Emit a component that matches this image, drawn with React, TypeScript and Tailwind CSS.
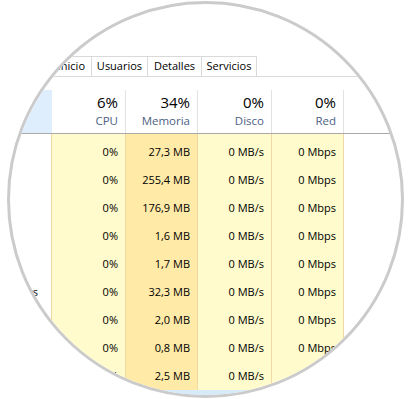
// Administrador de tareas — vista recortada en círculo
const FONT = "font-['Open_Sans','Segoe_UI',sans-serif]";

type Row = { name: string; cpu: string; mem: string; disk: string; net: string };

// Solo la fila 6 deja ver el final de su nombre dentro del círculo
const ROWS: Row[] = [
  { name: "", cpu: "0%", mem: "27,3 MB", disk: "0 MB/s", net: "0 Mbps" },
  { name: "", cpu: "0%", mem: "255,4 MB", disk: "0 MB/s", net: "0 Mbps" },
  { name: "", cpu: "0%", mem: "176,9 MB", disk: "0 MB/s", net: "0 Mbps" },
  { name: "", cpu: "0%", mem: "1,6 MB", disk: "0 MB/s", net: "0 Mbps" },
  { name: "", cpu: "0%", mem: "1,7 MB", disk: "0 MB/s", net: "0 Mbps" },
  { name: "Hosts", cpu: "0%", mem: "32,3 MB", disk: "0 MB/s", net: "0 Mbps" },
  { name: "", cpu: "0%", mem: "2,0 MB", disk: "0 MB/s", net: "0 Mbps" },
  { name: "", cpu: "0%", mem: "0,8 MB", disk: "0 MB/s", net: "0 Mbps" },
  { name: "", cpu: "0%", mem: "2,5 MB", disk: "0 MB/s", net: "0 Mbps" },
];

const TABS = [
  { label: "Inicio", w: "w-[50px]", align: "justify-end pr-[6px]" },
  { label: "Usuarios", w: "w-[56px]", align: "justify-center" },
  { label: "Detalles", w: "w-[54px]", align: "justify-center" },
  { label: "Servicios", w: "w-[55px]", align: "justify-center" },
];

function HeaderCell({ pct, label, w }: { pct: string; label: string; w: string }) {
  return (
    <div className={`${w} flex flex-col items-end pr-[7px] pt-[2px] border-r border-[#e2e2e2]`}>
      <span className="text-[15px] leading-[20px] text-black">{pct}</span>
      <span className="text-[11.5px] leading-[16px] mt-[1px] text-[#4c6183]">{label}</span>
    </div>
  );
}

function Cell({ children, w, bg }: { children?: string; w: string; bg: string }) {
  return (
    <div className={`${w} ${bg} h-full flex items-center justify-end pr-[7px] border-r border-[#f2d8a2] whitespace-nowrap`}>
      {children}
    </div>
  );
}

export default function App() {
  return (
    <div className={`w-[410px] h-[399px] bg-white overflow-hidden ${FONT}`}>
      <div className="ml-[7px] mt-[1px] w-[397px] h-[397px] rounded-full border-[3px] border-[#cbcbcb] overflow-hidden bg-white">
        <div className="-ml-[10px] -mt-[4px] w-[410px]">
          <div className="h-[56px]" />

          {/* Pestañas */}
          <div className="flex h-[21px] border-b border-[#d9d9d9]">
            <div className="w-[42px]" />
            {TABS.map((t, i) => (
              <div
                key={t.label}
                className={`${t.w} ${t.align} flex items-center text-[11px] text-black border-t border-r border-[#d9d9d9] ${i === 0 ? "border-l" : ""}`}
              >
                {t.label}
              </div>
            ))}
          </div>

          <div className="h-[13px]" />

          {/* Cabecera de columnas */}
          <div className="flex h-[44px] border-b border-[#a9a9a9]">
            <div className="w-[52px] bg-[#deeefc]" />
            <HeaderCell pct="6%" label="CPU" w="w-[74px]" />
            <HeaderCell pct="34%" label="Memoria" w="w-[72px]" />
            <HeaderCell pct="0%" label="Disco" w="w-[74px]" />
            <HeaderCell pct="0%" label="Red" w="w-[72px]" />
          </div>

          {/* Filas */}
          <div className="text-[11px] text-black">
            <div className="flex h-[4px]">
              <div className="w-[52px] border-r border-[#f2d8a2]" />
              <Cell w="w-[74px]" bg="bg-[#fffbcc]" />
              <Cell w="w-[72px]" bg="bg-[#ffeaa8]" />
              <Cell w="w-[74px]" bg="bg-[#fffbcc]" />
              <Cell w="w-[72px]" bg="bg-[#fffbcc]" />
            </div>
            {ROWS.map((r, i) => (
              <div key={i} className="flex h-[28px]">
                <div className="w-[52px] h-full flex items-center justify-end pr-[13px] whitespace-nowrap border-r border-[#f2d8a2]">
                  {r.name}
                </div>
                <Cell w="w-[74px]" bg="bg-[#fffbcc]">{r.cpu}</Cell>
                <Cell w="w-[72px]" bg="bg-[#ffeaa8]">{r.mem}</Cell>
                <Cell w="w-[74px]" bg="bg-[#fffbcc]">{r.disk}</Cell>
                <Cell w="w-[72px]" bg="bg-[#fffbcc]">{r.net}</Cell>
              </div>
            ))}
            <div className="h-[28px] bg-[#d6eaf8]" />
          </div>
        </div>
      </div>
    </div>
  );
}
